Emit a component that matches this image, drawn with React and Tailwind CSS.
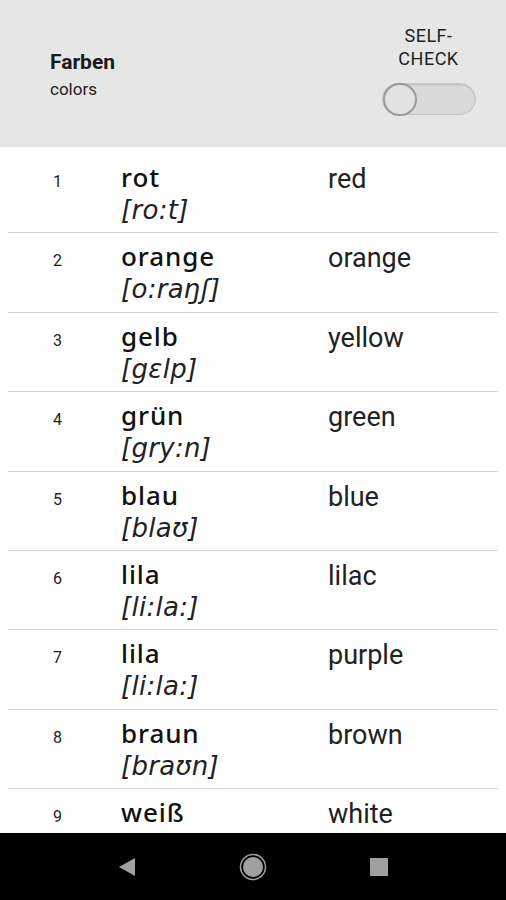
import React from "react";

const words = [
  { n: 1, de: "rot", ipa: "[ro:t]", en: "red" },
  { n: 2, de: "orange", ipa: "[o:raŋʃ]", en: "orange" },
  { n: 3, de: "gelb", ipa: "[gɛlp]", en: "yellow" },
  { n: 4, de: "grün", ipa: "[gry:n]", en: "green" },
  { n: 5, de: "blau", ipa: "[blaʊ]", en: "blue" },
  { n: 6, de: "lila", ipa: "[li:la:]", en: "lilac" },
  { n: 7, de: "lila", ipa: "[li:la:]", en: "purple" },
  { n: 8, de: "braun", ipa: "[braʊn]", en: "brown" },
  { n: 9, de: "weiß", ipa: "[vaɪs]", en: "white" },
];

function Row({ w }) {
  return (
    <div className="h-[79.4px] shrink-0 px-[8px]">
      <div className="flex h-full border-b border-[#d4d4d4]">
        <div className="w-[113px] pl-[45px] pt-[16px] font-['Roboto',sans-serif] text-[16px] text-[#222]">{w.n}</div>
        <div className="w-[207px] pt-[7px]">
          <div className="h-[33px] font-['Noto_Sans',sans-serif] text-[26px] font-medium leading-[32px] tracking-[0.9px] text-[#111]">
            {w.de}
          </div>
          <div className="h-[32px] font-['DejaVu_Sans',sans-serif] text-[26px] italic leading-[32px] tracking-[0.3px] text-[#222]">{w.ipa}</div>
        </div>
        <div className="pt-[9px] font-['Roboto',sans-serif] text-[27px] leading-[32px] text-[#222]">{w.en}</div>
      </div>
    </div>
  );
}

export default function App() {
  return (
    <div className="flex h-[900px] w-[506px] flex-col overflow-hidden bg-white font-['Roboto',sans-serif]">
      {/* header */}
      <div className="flex h-[147px] shrink-0 items-start justify-between bg-[#e6e6e6]">
        <div className="pl-[50px] pt-[48px]">
          <div className="text-[21px] font-bold leading-[28px] text-[#1a1a1a]">Farben</div>
          <div className="mt-[1px] text-[17px] leading-[24px] text-[#222]">colors</div>
        </div>
        <div className="flex w-[125px] flex-col items-center pr-[30px] pt-[24px]">
          <div className="text-center text-[18px] leading-[23px] tracking-[0.5px] text-[#1f1f1f]">
            SELF-
            <br />
            CHECK
          </div>
          <div className="relative mt-[13px] h-[32px] w-[94px] rounded-full border border-[#c4c4c4] bg-[#dadada] shadow-[inset_0_1px_2px_rgba(0,0,0,0.15)]">
            <div className="absolute left-[0px] top-[-1px] h-[33px] w-[34px] rounded-full border-2 border-[#9a9a9a] bg-[#e2e2e2]" />
          </div>
        </div>
      </div>

      {/* list */}
      <div className="flex flex-1 flex-col overflow-hidden pt-[7px]">
        {words.map((w) => (
          <Row key={w.n} w={w} />
        ))}
      </div>

      {/* nav bar */}
      <div className="flex h-[67px] shrink-0 items-center justify-center bg-black">
        <div className="flex w-[126px] justify-center">
          <svg width="18" height="20" viewBox="0 0 18 20">
            <path d="M17 1 L1 10 L17 19 Z" fill="#a0a0a0" />
          </svg>
        </div>
        <div className="flex w-[126px] justify-center">
          <svg width="28" height="28" viewBox="0 0 28 28">
            <circle cx="14" cy="14" r="12.5" fill="none" stroke="#a0a0a0" strokeWidth="1.5" />
            <circle cx="14" cy="14" r="10" fill="#a0a0a0" />
          </svg>
        </div>
        <div className="flex w-[126px] justify-center">
          <div className="h-[18px] w-[18px] bg-[#a0a0a0]" />
        </div>
      </div>
    </div>
  );
}
